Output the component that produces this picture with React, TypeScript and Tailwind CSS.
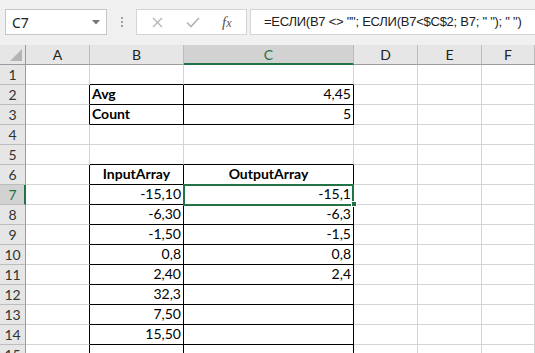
import { Fragment } from "react";

const cols = ["A", "B", "C", "D", "E", "F"];

type Cell = { v: string; bold?: boolean; align?: "left" | "right" | "center" };

const data: Record<string, Cell> = {
  B2: { v: "Avg", bold: true, align: "left" },
  C2: { v: "4,45" },
  B3: { v: "Count", bold: true, align: "left" },
  C3: { v: "5" },
  B6: { v: "InputArray", bold: true, align: "center" },
  C6: { v: "OutputArray", bold: true, align: "center" },
  B7: { v: "-15,10" },
  C7: { v: "-15,1" },
  B8: { v: "-6,30" },
  C8: { v: "-6,3" },
  B9: { v: "-1,50" },
  C9: { v: "-1,5" },
  B10: { v: "0,8" },
  C10: { v: "0,8" },
  B11: { v: "2,40" },
  C11: { v: "2,4" },
  B12: { v: "32,3" },
  B13: { v: "7,50" },
  B14: { v: "15,50" },
};

const rows = Array.from({ length: 15 }, (_, i) => i + 1);

// black "all borders" ranges: B2:C3 and B6:C15
const boxed = (r: number, c: number) => (c === 1 || c === 2) && ((r >= 2 && r <= 3) || r >= 6);

const font = { fontFamily: "Lato, 'Liberation Sans', sans-serif" };

function Toolbar() {
  return (
    <div className="flex h-[45px] items-center bg-[#f0f0f0] pb-[1px]">
      <div className="ml-[5px] flex h-[26px] w-[102px] shrink-0 items-center justify-between border border-[#c6c6c6] bg-white pl-[6px] pr-[6px]">
        <span className="text-[14px] text-[#222]" style={{ fontFamily: "'Noto Sans', sans-serif" }}>
          C7
        </span>
        <svg width="8" height="5" viewBox="0 0 8 5">
          <path d="M0 0h8L4 4.5z" fill="#777" />
        </svg>
      </div>
      <div className="ml-[14px] flex shrink-0 flex-col gap-[2px]">
        <span className="h-[2px] w-[2px] bg-[#a0a0a0]" />
        <span className="h-[2px] w-[2px] bg-[#a0a0a0]" />
        <span className="h-[2px] w-[2px] bg-[#a0a0a0]" />
      </div>
      <div className="ml-[13px] flex h-[26px] w-[111px] shrink-0 items-center border border-[#d4d4d4] bg-white">
        <svg className="ml-[15px]" width="11" height="11" viewBox="0 0 11 11">
          <path d="M1 1l9 9M10 1l-9 9" stroke="#b4b4b4" strokeWidth="1.3" />
        </svg>
        <svg className="ml-[23px]" width="14" height="11" viewBox="0 0 14 11">
          <path d="M1 5.5l4 4L13 1" stroke="#b4b4b4" strokeWidth="1.6" fill="none" />
        </svg>
        <span
          className="ml-[22px] text-[15px] italic text-[#555]"
          style={{ fontFamily: "'Liberation Serif', serif" }}
        >
          f<span className="text-[12px]">x</span>
        </span>
      </div>
      <div className="ml-[3px] flex h-[26px] min-w-0 flex-1 items-center overflow-hidden border border-r-0 border-[#d4d4d4] bg-white pl-[13px]">
        <span
          className="whitespace-pre text-[13px] tracking-[-0.25px] text-[#222]"
          style={{ fontFamily: "'Liberation Sans', sans-serif" }}
        >
          {'=ЕСЛИ(B7 <> ""; ЕСЛИ(B7<$C$2; B7; " "); " ")'}
        </span>
      </div>
    </div>
  );
}

function ColHeaders() {
  return (
    <>
      <div className="relative h-[20px] border-r border-b border-[#9b9b9b] bg-[#e6e6e6]">
        <svg className="absolute bottom-[3px] right-[3px]" width="12" height="12" viewBox="0 0 12 12">
          <path d="M12 0v12H0z" fill="#b4b4b4" />
        </svg>
      </div>
      {cols.map((c) => {
        const sel = c === "C";
        return (
          <div
            key={c}
            className={
              sel
                ? "flex h-[20px] items-center justify-center border-r border-b-2 border-r-[#bcbcbc] border-b-[#217346] bg-[#d2d2d2] pt-[1px] text-[14px] text-[#217346]"
                : "flex h-[20px] items-center justify-center border-r border-b border-r-[#bcbcbc] border-b-[#9b9b9b] bg-[#e6e6e6] text-[14px] text-[#222]"
            }
          >
            {c}
          </div>
        );
      })}
    </>
  );
}

export default function App() {
  return (
    <div className="h-[353px] w-[535px] overflow-hidden bg-white" style={font}>
      <Toolbar />
      <div className="relative grid grid-cols-[26px_64px_94px_170px_64px_64px_1fr] auto-rows-[20px]">
        <ColHeaders />
        {rows.map((r) => (
          <Fragment key={r}>
            <div
              className={
                r === 7
                  ? "flex h-[20px] items-center justify-center border-r-2 border-b border-r-[#217346] border-b-[#bcbcbc] bg-[#d2d2d2] pl-[1px] text-[14px] text-[#217346]"
                  : "flex h-[20px] items-center justify-center border-r border-b border-r-[#9b9b9b] border-b-[#bcbcbc] bg-[#e6e6e6] text-[14px] text-[#333]"
              }
            >
              {r}
            </div>
            {cols.map((c, ci) => {
              const cell = data[c + r];
              const right = boxed(r, ci) || boxed(r, ci + 1);
              const bottom = boxed(r, ci) || boxed(r + 1, ci);
              const align = cell?.align ?? "right";
              return (
                <div
                  key={c}
                  className={[
                    "flex h-[20px] items-end overflow-hidden whitespace-nowrap border-r border-b pb-[1px] text-[14px] leading-[18px] text-black",
                    right ? "border-r-black" : "border-r-[#d4d4d4]",
                    bottom ? "border-b-black" : "border-b-[#d4d4d4]",
                    align === "left" ? "justify-start pl-[2px]" : align === "center" ? "justify-center" : "justify-end pr-[2px]",
                    cell?.bold ? "font-bold" : "",
                  ].join(" ")}
                >
                  {cell?.v}
                </div>
              );
            })}
          </Fragment>
        ))}
        {/* active cell C7 */}
        <div className="pointer-events-none absolute left-[183px] top-[139px] h-[22px] w-[171px] border-2 border-[#217346]" />
        <div className="pointer-events-none absolute left-[351px] top-[156px] h-[6px] w-[6px] border border-white bg-[#217346]" />
      </div>
    </div>
  );
}
